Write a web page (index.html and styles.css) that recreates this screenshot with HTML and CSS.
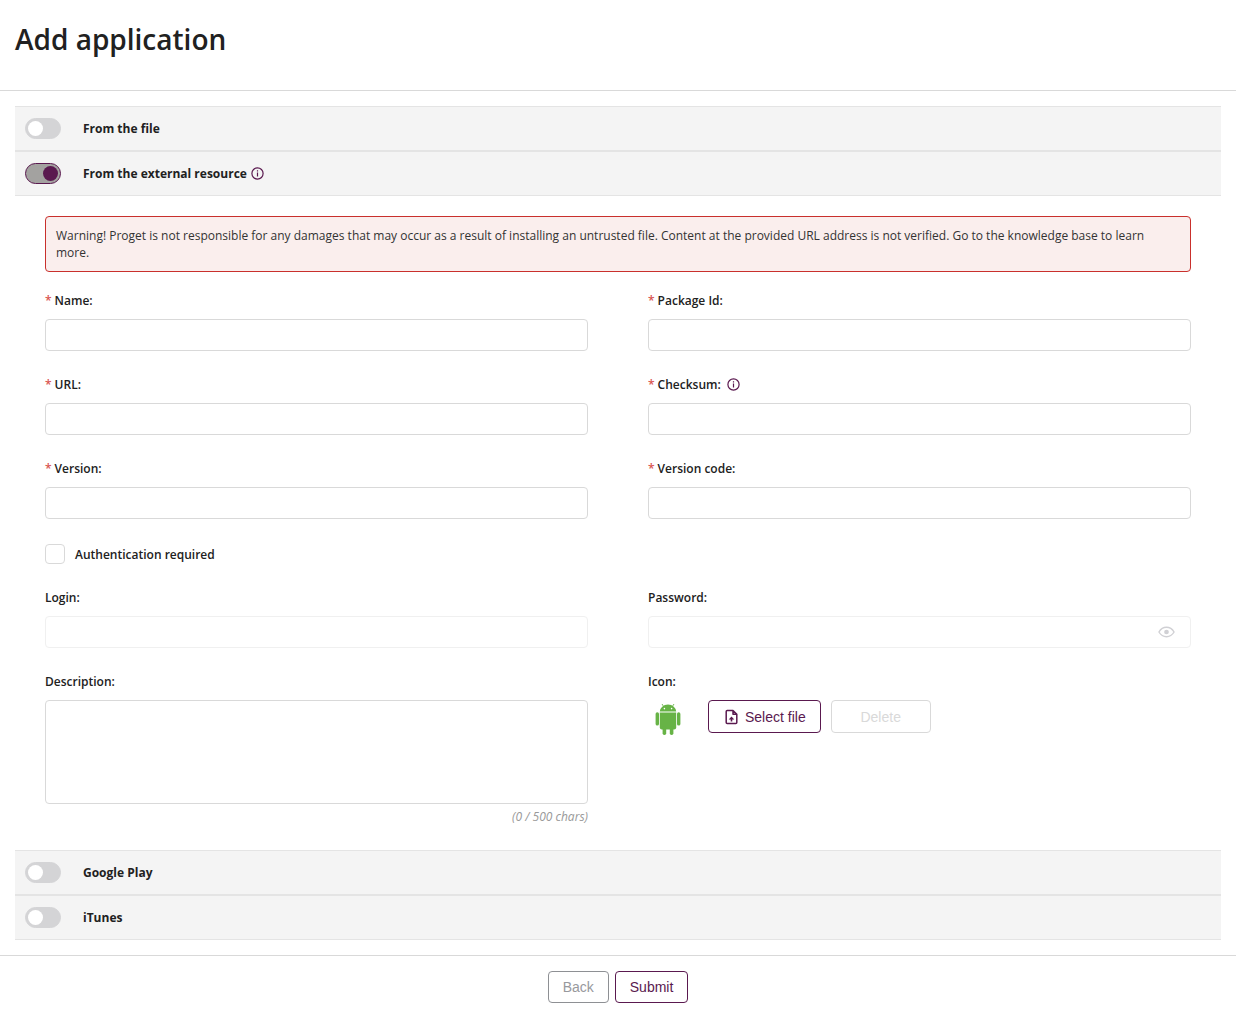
FILE: index.html
```html
<!DOCTYPE html>
<html lang="en">
<head>
<meta charset="utf-8">
<meta name="viewport" content="width=device-width, initial-scale=1">
<title>Add application</title>
<link rel="stylesheet" href="styles.css">
</head>
<body>
<svg class="sprite" aria-hidden="true">
  <symbol id="info" viewBox="0 0 13 13">
    <circle cx="6.5" cy="6.5" r="5.6" fill="none" stroke="currentColor" stroke-width="1.2"/>
    <path d="M6.5 5.6V9.4M6.5 3.3V4.5" fill="none" stroke="currentColor" stroke-width="1.2"/>
  </symbol>
</svg>
<header class="page-header">
  <h1 class="page-title">Add application</h1>
</header>
<form class="app-form">
  <main class="sections">
    <div class="section-bar">
      <input class="switch" type="checkbox" role="switch" id="src-file">
      <label for="src-file">From the file</label>
    </div>
    <div class="section-bar">
      <input class="switch" type="checkbox" role="switch" id="src-external" checked>
      <label for="src-external">From the external resource</label>
      <svg class="info-icon" aria-hidden="true"><use href="#info"/></svg>
    </div>
    <div class="section-body">
      <p class="alert" role="alert">Warning! Proget is not responsible for any damages that may occur as a result of installing an untrusted file. Content at the provided URL address is not verified. Go to the knowledge base to learn more.</p>
      <div class="fields">
        <div class="field">
          <div class="field-label"><span class="required">*</span><label for="name">Name:</label></div>
          <input class="control" type="text" id="name">
        </div>
        <div class="field">
          <div class="field-label"><span class="required">*</span><label for="package">Package Id:</label></div>
          <input class="control" type="text" id="package">
        </div>
        <div class="field">
          <div class="field-label"><span class="required">*</span><label for="url">URL:</label></div>
          <input class="control" type="text" id="url">
        </div>
        <div class="field">
          <div class="field-label"><span class="required">*</span><label for="checksum">Checksum:</label><svg class="info-icon spaced" aria-hidden="true"><use href="#info"/></svg></div>
          <input class="control" type="text" id="checksum">
        </div>
        <div class="field">
          <div class="field-label"><span class="required">*</span><label for="version">Version:</label></div>
          <input class="control" type="text" id="version">
        </div>
        <div class="field">
          <div class="field-label"><span class="required">*</span><label for="version-code">Version code:</label></div>
          <input class="control" type="text" id="version-code">
        </div>
        <div class="check-row">
          <input class="checkbox" type="checkbox" id="auth">
          <label for="auth">Authentication required</label>
        </div>
        <div class="field">
          <div class="field-label"><label for="login">Login:</label></div>
          <input class="control" type="text" id="login" disabled>
        </div>
        <div class="field">
          <div class="field-label"><label for="password">Password:</label></div>
          <div class="password">
            <input class="control" type="password" id="password" disabled>
            <svg class="eye-icon" viewBox="0 0 18 12" aria-hidden="true">
              <path d="M1 6C3 2.600 5.700 1 9 1s6 1.600 8 5c-2 3.400-4.700 5-8 5S3 9.400 1 6Z" fill="none" stroke="currentColor" stroke-width="1.500"/>
              <circle cx="9" cy="6" r="2.500" fill="currentColor"/>
            </svg>
          </div>
        </div>
        <div class="field">
          <div class="field-label"><label for="description">Description:</label></div>
          <textarea class="control description" id="description"></textarea>
          <p class="counter">(0 / 500 chars)</p>
        </div>
        <div class="field">
          <div class="field-label"><label for="icon-file">Icon:</label></div>
          <div class="icon-row">
            <svg class="android" viewBox="0 0 40 40" aria-hidden="true">
              <g fill="#67b346">
                <path d="M11.800 11.600a8.200 7 0 0 1 16.400 0Z"/>
                <path d="M14 4l2 3M26 4l-2 3" stroke="#67b346" stroke-width=".9"/>
                <path d="M11.800 12.400h16.400v15.100a2 2 0 0 1-2 2H13.800a2 2 0 0 1-2-2Z"/>
                <rect x="7.600" y="12.200" width="3.400" height="13.400" rx="1.700"/>
                <rect x="29" y="12.200" width="3.400" height="13.400" rx="1.700"/>
                <rect x="14.600" y="26" width="3.600" height="9" rx="1.700"/>
                <rect x="21.800" y="26" width="3.600" height="9" rx="1.700"/>
              </g>
              <g fill="#fff"><circle cx="16.400" cy="8.600" r=".8"/><circle cx="23.600" cy="8.600" r=".8"/></g>
            </svg>
            <div class="button-group">
              <button class="button primary" type="button" id="icon-file">
                <svg class="file-icon" viewBox="0 0 13 16" aria-hidden="true">
                  <path d="M8 1.500H2.200Q1.200 1.500 1.200 2.500V13.500Q1.200 14.500 2.200 14.500H10.800Q11.800 14.500 11.800 13.500V5.300L8 1.500V5.300H11.800" fill="none" stroke="currentColor" stroke-width="1.500" stroke-linejoin="round"/>
                  <path d="M6.500 7.500L9.300 10.500H7.300V12.500H5.700V10.500H3.700Z" fill="currentColor"/>
                </svg>
                Select file
              </button>
              <button class="button delete" type="button" disabled>Delete</button>
            </div>
          </div>
        </div>
      </div>
    </div>
    <div class="section-bar">
      <input class="switch" type="checkbox" role="switch" id="src-play">
      <label for="src-play">Google Play</label>
    </div>
    <div class="section-bar">
      <input class="switch" type="checkbox" role="switch" id="src-itunes">
      <label for="src-itunes">iTunes</label>
    </div>
  </main>
  <footer class="actions">
    <button class="button back" type="button">Back</button>
    <button class="button primary" type="submit">Submit</button>
  </footer>
</form>
</body>
</html>
```

FILE: styles.css
```css
:root {
  --accent: #5a194f;
  --line: #d9d9d9;
  --text: #212121;
}

* {
  box-sizing: border-box;
}

body {
  margin: 0;
  background: #fff;
  color: var(--text);
  font: 12px/17px "Open Sans", sans-serif;
}

p,
h1 {
  margin: 0;
}

input {
  margin: 0;
}

.sprite {
  display: none;
}

.page-header {
  padding: 19px 15px 31px;
  border-bottom: 1px solid var(--line);
}

.page-title {
  font-size: 28px;
  font-weight: 600;
  line-height: 40px;
}

.sections {
  padding: 15px;
}

.section-bar {
  display: flex;
  align-items: center;
  height: 45px;
  padding: 0 10px;
  border: solid #e4e4e4;
  border-width: 1px 0;
  background: #f4f4f4;
  font-weight: 700;
}

.switch {
  appearance: none;
  display: flex;
  align-items: center;
  width: 36px;
  height: 21px;
  margin-right: 22px;
  padding: 0 2px;
  border: 1px solid #d4d4d6;
  border-radius: 11px;
  background: #d4d4d6;
}

.switch::before {
  content: "";
  width: 15px;
  height: 15px;
  border-radius: 50%;
  background: #fff;
}

.switch:checked {
  justify-content: flex-end;
  border-color: var(--accent);
  background: #a3a2a0;
}

.switch:checked::before {
  background: var(--accent);
}

.info-icon {
  width: 13px;
  height: 13px;
  margin-left: 4px;
  color: var(--accent);
}

.info-icon.spaced {
  margin-left: 6px;
}

.section-body {
  padding: 20px 30px 25px;
}

.alert {
  margin-bottom: 17px;
  padding: 10px;
  border: 1px solid #c9302c;
  border-radius: 4px;
  background: #faeeed;
  color: #333;
}

.fields {
  display: grid;
  grid-template-columns: 1fr 1fr;
  gap: 22px 60px;
}

.field-label {
  display: flex;
  align-items: center;
  height: 22px;
  margin-bottom: 8px;
  font-weight: 600;
}

.required {
  margin-right: 3px;
  color: #d9534f;
}

.control {
  display: block;
  width: 100%;
  height: 32px;
  padding: 4px 10px;
  border: 1px solid var(--line);
  border-radius: 4px;
  background: #fff;
  font: inherit;
}

.control:disabled {
  border-color: #f0f0f0;
}

.description {
  height: 104px;
  resize: none;
}

.counter {
  margin-top: 4px;
  color: #999;
  font-style: italic;
  text-align: right;
}

.check-row {
  grid-column: 1 / -1;
  display: flex;
  align-items: center;
  gap: 10px;
  padding-top: 3px;
  font-weight: 600;
}

.checkbox {
  appearance: none;
  width: 20px;
  height: 20px;
  border: 1px solid var(--line);
  border-radius: 4px;
}

.password {
  position: relative;
}

.eye-icon {
  position: absolute;
  top: 10px;
  right: 16px;
  width: 17px;
  height: 12px;
  color: #d0d0d4;
}

.icon-row {
  display: flex;
  align-items: flex-start;
  gap: 20px;
}

.android {
  width: 40px;
  height: 40px;
}

.button-group {
  display: flex;
  gap: 10px;
}

.button {
  display: flex;
  align-items: center;
  justify-content: center;
  gap: 7px;
  height: 32px;
  padding: 0 14px;
  border: 1px solid #8e9094;
  border-radius: 4px;
  background: #fff;
  color: #98999d;
  font: 14px/20px "Liberation Sans", Arial, sans-serif;
}

.button-group .button {
  height: 33px;
}

.button.primary {
  border-color: var(--accent);
  color: var(--accent);
}

.button-group .primary {
  padding: 0 14px 0 16px;
}

.button.delete {
  width: 100px;
  border-color: var(--line);
  color: #d9d9d9;
}

.file-icon {
  width: 13px;
  height: 16px;
}

.actions {
  display: flex;
  justify-content: center;
  gap: 6px;
  padding: 15px;
  border-top: 1px solid var(--line);
}
```
